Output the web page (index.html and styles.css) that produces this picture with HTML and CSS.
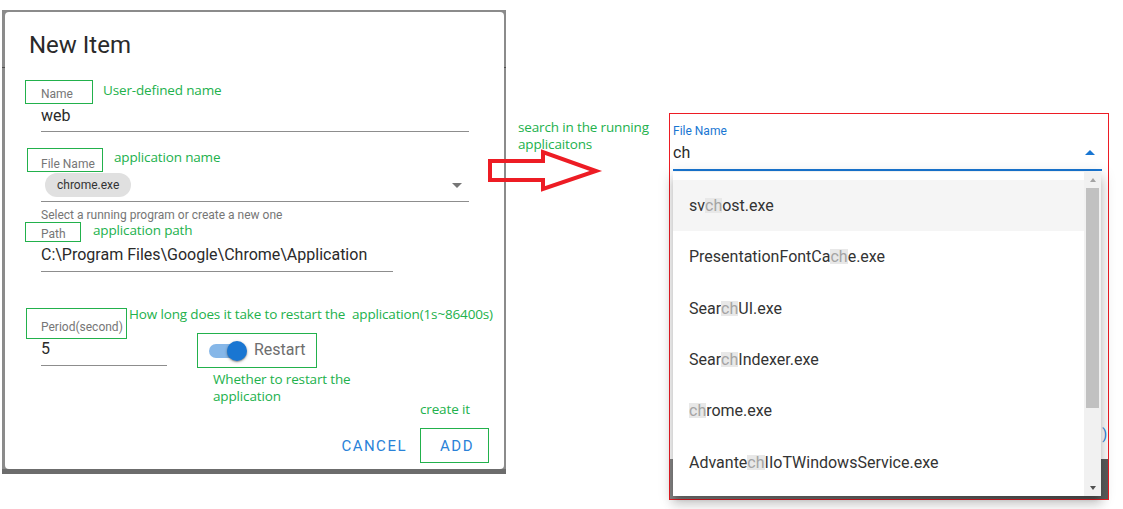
FILE: index.html
```html
<!DOCTYPE html>
<html lang="en">
<head>
<meta charset="utf-8">
<title>New Item</title>
<link rel="stylesheet" href="styles.css">
</head>
<body>
<div class="canvas">
  <div class="frame">
    <div class="dialog">
      <h2 class="dlg-title">New Item</h2>
      <div class="fields">
        <div class="ann-row row-name">
          <span class="ann-box box-name"><span class="lbl">Name</span></span>
          <span class="note note-name">User-defined name</span>
        </div>
        <div class="input input-name">web</div>

        <div class="ann-row row-file">
          <span class="ann-box box-file"><span class="lbl">File Name</span></span>
          <span class="note note-file">application name</span>
        </div>
        <div class="select">
          <span class="chip">chrome.exe</span>
          <span class="caret-down"></span>
        </div>
        <div class="helper">Select a running program or create a new one</div>

        <div class="ann-row row-path">
          <span class="ann-box box-path"><span class="lbl">Path</span></span>
          <span class="note note-path">application path</span>
        </div>
        <div class="input input-path">C:\Program Files\Google\Chrome\Application</div>

        <div class="period-row">
          <div class="period-col">
            <div class="ann-row">
              <span class="ann-box box-period"><span class="lbl">Period(second)</span></span>
              <span class="note note-period">How long does it take to restart the&nbsp; application(1s~86400s)</span>
            </div>
            <div class="input input-period">5</div>
          </div>
          <div class="restart-col">
            <div class="ann-box box-restart">
              <span class="switch"><span class="track"></span><span class="thumb"></span></span>
              <span class="restart-label">Restart</span>
            </div>
            <div class="note note-restart">Whether to restart the<br>application</div>
          </div>
        </div>
      </div>
      <div class="actions">
        <span class="btn btn-cancel">CANCEL</span>
        <div class="add-col">
          <span class="note note-create">create it</span>
          <span class="ann-box btn btn-add">ADD</span>
        </div>
      </div>
    </div>
  </div>

  <div class="mid">
    <div class="note note-search">search in the running<br>applicaitons</div>
  </div>

  <div class="panel">
    <div class="panel-label">File Name</div>
    <div class="panel-input">
      <span>ch</span>
      <span class="caret-up"></span>
    </div>
    <div class="behind-row"><span class="behind-char">)</span></div>
    <div class="behind-band"></div>

    <div class="popup">
      <div class="list">
        <div class="item active">sv<span class="hl">ch</span>ost.exe</div>
        <div class="item">PresentationFontCa<span class="hl">ch</span>e.exe</div>
        <div class="item">Sear<span class="hl">ch</span>UI.exe</div>
        <div class="item">Sear<span class="hl">ch</span>Indexer.exe</div>
        <div class="item"><span class="hl">ch</span>rome.exe</div>
        <div class="item">Advante<span class="hl">ch</span>IIoTWindowsService.exe</div>
      </div>
      <div class="sb">
        <span class="sb-btn"><span class="sb-up"></span></span>
        <span class="sb-thumb"></span>
        <span class="sb-fill"></span>
        <span class="sb-btn sb-btn-down"><span class="sb-down"></span></span>
      </div>
    </div>
  </div>

  <svg class="arrow" width="130" height="60" viewBox="480 140 130 60" aria-hidden="true">
    <polygon points="490,161 543,161 543,152 596,171 543,189 543,180 490,180" fill="none" stroke="#ed1c24" stroke-width="4" stroke-linejoin="miter"/>
  </svg>
</div>
</body>
</html>
```

FILE: styles.css
```css
* { box-sizing: border-box; }

html, body {
  margin: 0;
  padding: 0;
  background: #fff;
}

body {
  width: 1123px;
  height: 509px;
  overflow: hidden;
  font-family: Roboto, "Liberation Sans", Arial, sans-serif;
  color: #2a2a2a;
}

.canvas {
  position: relative;
  display: flex;
  align-items: flex-start;
  height: 509px;
}

/* ---------- left: dialog screenshot ---------- */
.frame {
  margin: 10px 0 0 2px;
  padding: 2px 2px 5px 3px;
  background: linear-gradient(to bottom,
    #8b8b8b 0, #8b8b8b 57px,
    #4f4f4f 57px, #4f4f4f 58px,
    #8b8b8b 58px, #8b8b8b 459px,
    #6c6c6c 459px, #6c6c6c 100%);
}

.dialog {
  width: 499px;
  height: 457px;
  background: #fff;
  border-radius: 4px;
  display: flex;
  flex-direction: column;
}

.dlg-title {
  margin: 0;
  padding: 19px 0 0 24px;
  font-size: 24px;
  line-height: 28px;
  font-weight: 400;
  color: #2a2a2a;
}

.fields {
  padding-left: 36px;
}

.ann-row {
  display: flex;
  align-items: flex-start;
  white-space: nowrap;
}

.ann-box {
  display: flex;
  align-items: flex-end;
  flex: none;
  border: 1px solid #22b14c;
}

.lbl {
  font-size: 12px;
  line-height: 14px;
  color: #767676;
}

.note {
  font-family: "Open Sans", "Noto Sans", sans-serif;
  font-size: 13.5px;
  letter-spacing: -0.15px;
  line-height: 17px;
  color: #22b14c;
  white-space: nowrap;
}

/* Name */
.row-name { margin-top: 21px; }
.box-name { width: 68px; height: 24px; margin-left: -16px; padding: 0 0 2px 15px; }
.note-name { margin: 2px 0 0 10px; }

.input {
  font-size: 16px;
  line-height: 19px;
  color: #2a2a2a;
  border-bottom: 1px solid #8d8d8d;
  white-space: nowrap;
}
.input-name { width: 428px; margin-top: 2px; padding-bottom: 6px; }

/* File name */
.row-file { margin-top: 16px; }
.box-file { width: 76px; height: 24px; margin-left: -14px; padding-left: 13px; }
.note-file { margin: 1px 0 0 11px; }

.select {
  width: 428px;
  margin-top: 1px;
  padding-bottom: 4px;
  border-bottom: 1px solid #8d8d8d;
  display: flex;
  align-items: center;
  justify-content: space-between;
}

.chip {
  margin-left: 4px;
  height: 24px;
  padding: 0 12px;
  border-radius: 12px;
  background: #e0e0e0;
  font-size: 12px;
  line-height: 24px;
  color: #333;
}

.caret-down {
  width: 0;
  height: 0;
  margin-right: 7px;
  border-left: 5px solid transparent;
  border-right: 5px solid transparent;
  border-top: 5px solid #767676;
}

.helper {
  margin-top: 6px;
  font-size: 12px;
  line-height: 14px;
  color: #767676;
}

/* Path */
.box-path { width: 56px; height: 20px; margin-left: -16px; padding-left: 15px; }
.note-path { margin: 0 0 0 12px; }
.input-path { width: 352px; margin-top: 3px; padding-bottom: 7px; }

/* Period + restart */
.period-row {
  display: flex;
  align-items: flex-start;
  margin: 36px 0 -20px;
}

.period-col {
  width: 126px;
  flex: none;
}

.box-period { width: 101px; height: 31px; margin-left: -15px; padding: 0 0 4px 14px; }
.note-period { margin: -2px 0 0 2px; }
.input-period { width: 126px; padding-bottom: 7px; }

.restart-col {
  margin: 25px 0 0 30px;
}

.box-restart {
  width: 120px;
  height: 35px;
  align-items: center;
  padding-left: 11px;
}

.switch {
  display: flex;
  align-items: center;
}

.track {
  width: 37px;
  height: 14px;
  border-radius: 7px;
  background: #86b7e8;
}

.thumb {
  width: 20px;
  height: 20px;
  margin-left: -19px;
  border-radius: 50%;
  background: #1976d2;
  box-shadow: 0 1px 3px rgba(0, 0, 0, 0.35), 0 1px 1px rgba(0, 0, 0, 0.2);
}

.restart-label {
  margin: -2px 0 0 7px;
  font-size: 16px;
  line-height: 19px;
  color: #6e6e6e;
}

.note-restart { margin: 3px 0 0 16px; }

/* Actions */
.actions {
  margin-top: auto;
  display: flex;
  justify-content: flex-end;
  align-items: flex-end;
  padding: 0 15px 6px 0;
}

.btn {
  height: 35px;
  display: flex;
  align-items: center;
  font-size: 15px;
  font-weight: 400;
  letter-spacing: 1.5px;
  color: #2a82d8;
}

.btn-cancel { margin-right: 13px; }

.add-col {
  display: flex;
  flex-direction: column;
  align-items: flex-start;
}

.note-create { display: block; }

.btn-add {
  margin-top: 10px;
  width: 69px;
  justify-content: center;
  padding-left: 5px;
}

/* ---------- middle: annotation ---------- */
.mid {
  width: 163px;
  flex: none;
  padding: 119px 0 0 12px;
}

.arrow {
  position: absolute;
  left: 480px;
  top: 140px;
}

/* ---------- right: open dropdown ---------- */
.panel {
  position: relative;
  margin-top: 113px;
  width: 440px;
  height: 387px;
  flex: none;
  border: 1px solid #ed1c24;
  display: flex;
  flex-direction: column;
}

.panel-label {
  margin: 10px 0 0 3px;
  font-size: 12px;
  line-height: 14px;
  color: #1976d2;
}

.panel-input {
  margin: 5px 6px 0 3px;
  padding-bottom: 7px;
  border-bottom: 2px solid #1976d2;
  display: flex;
  align-items: center;
  justify-content: space-between;
  font-size: 16px;
  line-height: 19px;
  color: #2a2a2a;
}

.caret-up {
  width: 0;
  height: 0;
  margin-right: 7px;
  border-left: 5px solid transparent;
  border-right: 5px solid transparent;
  border-bottom: 5px solid #1976d2;
}

.behind-row {
  margin-top: auto;
  margin-bottom: 17px;
  display: flex;
  justify-content: flex-end;
  padding-right: 1px;
}

.behind-char {
  font-size: 14px;
  line-height: 16px;
  color: #2a82d8;
}

.behind-band {
  height: 40px;
  background: linear-gradient(to right, #878787, #5c5c5c);
}

.popup {
  position: absolute;
  left: 3px;
  top: 58px;
  width: 428px;
  height: 324px;
  background: #fff;
  display: flex;
  box-shadow: 0 5px 5px -3px rgba(0, 0, 0, 0.2), 0 8px 10px 1px rgba(0, 0, 0, 0.14), 0 3px 14px 2px rgba(0, 0, 0, 0.12);
}

.list {
  flex: 1;
  padding: 8px 0;
}

.item {
  height: 51.3px;
  display: flex;
  align-items: center;
  padding-left: 16px;
  font-size: 16px;
  color: #333;
  white-space: nowrap;
}

.item.active { background: #f5f5f5; }

.hl {
  display: inline-block;
  line-height: 15px;
  background: #e8e8e8;
  color: #a4a4a4;
}

.sb {
  width: 17px;
  flex: none;
  background: #f1f1f1;
  display: flex;
  flex-direction: column;
  align-items: center;
}

.sb-btn {
  height: 16px;
  flex: none;
  display: flex;
  align-items: center;
  justify-content: center;
}

.sb-btn-down { height: 17px; }

.sb-up {
  width: 0;
  height: 0;
  border-left: 3.5px solid transparent;
  border-right: 3.5px solid transparent;
  border-bottom: 4px solid #a3a3a3;
}

.sb-down {
  width: 0;
  height: 0;
  border-left: 3.5px solid transparent;
  border-right: 3.5px solid transparent;
  border-top: 4px solid #505050;
}

.sb-thumb {
  width: 13px;
  height: 220px;
  flex: none;
  background: #c1c1c1;
}

.sb-fill { flex: 1; }
```
